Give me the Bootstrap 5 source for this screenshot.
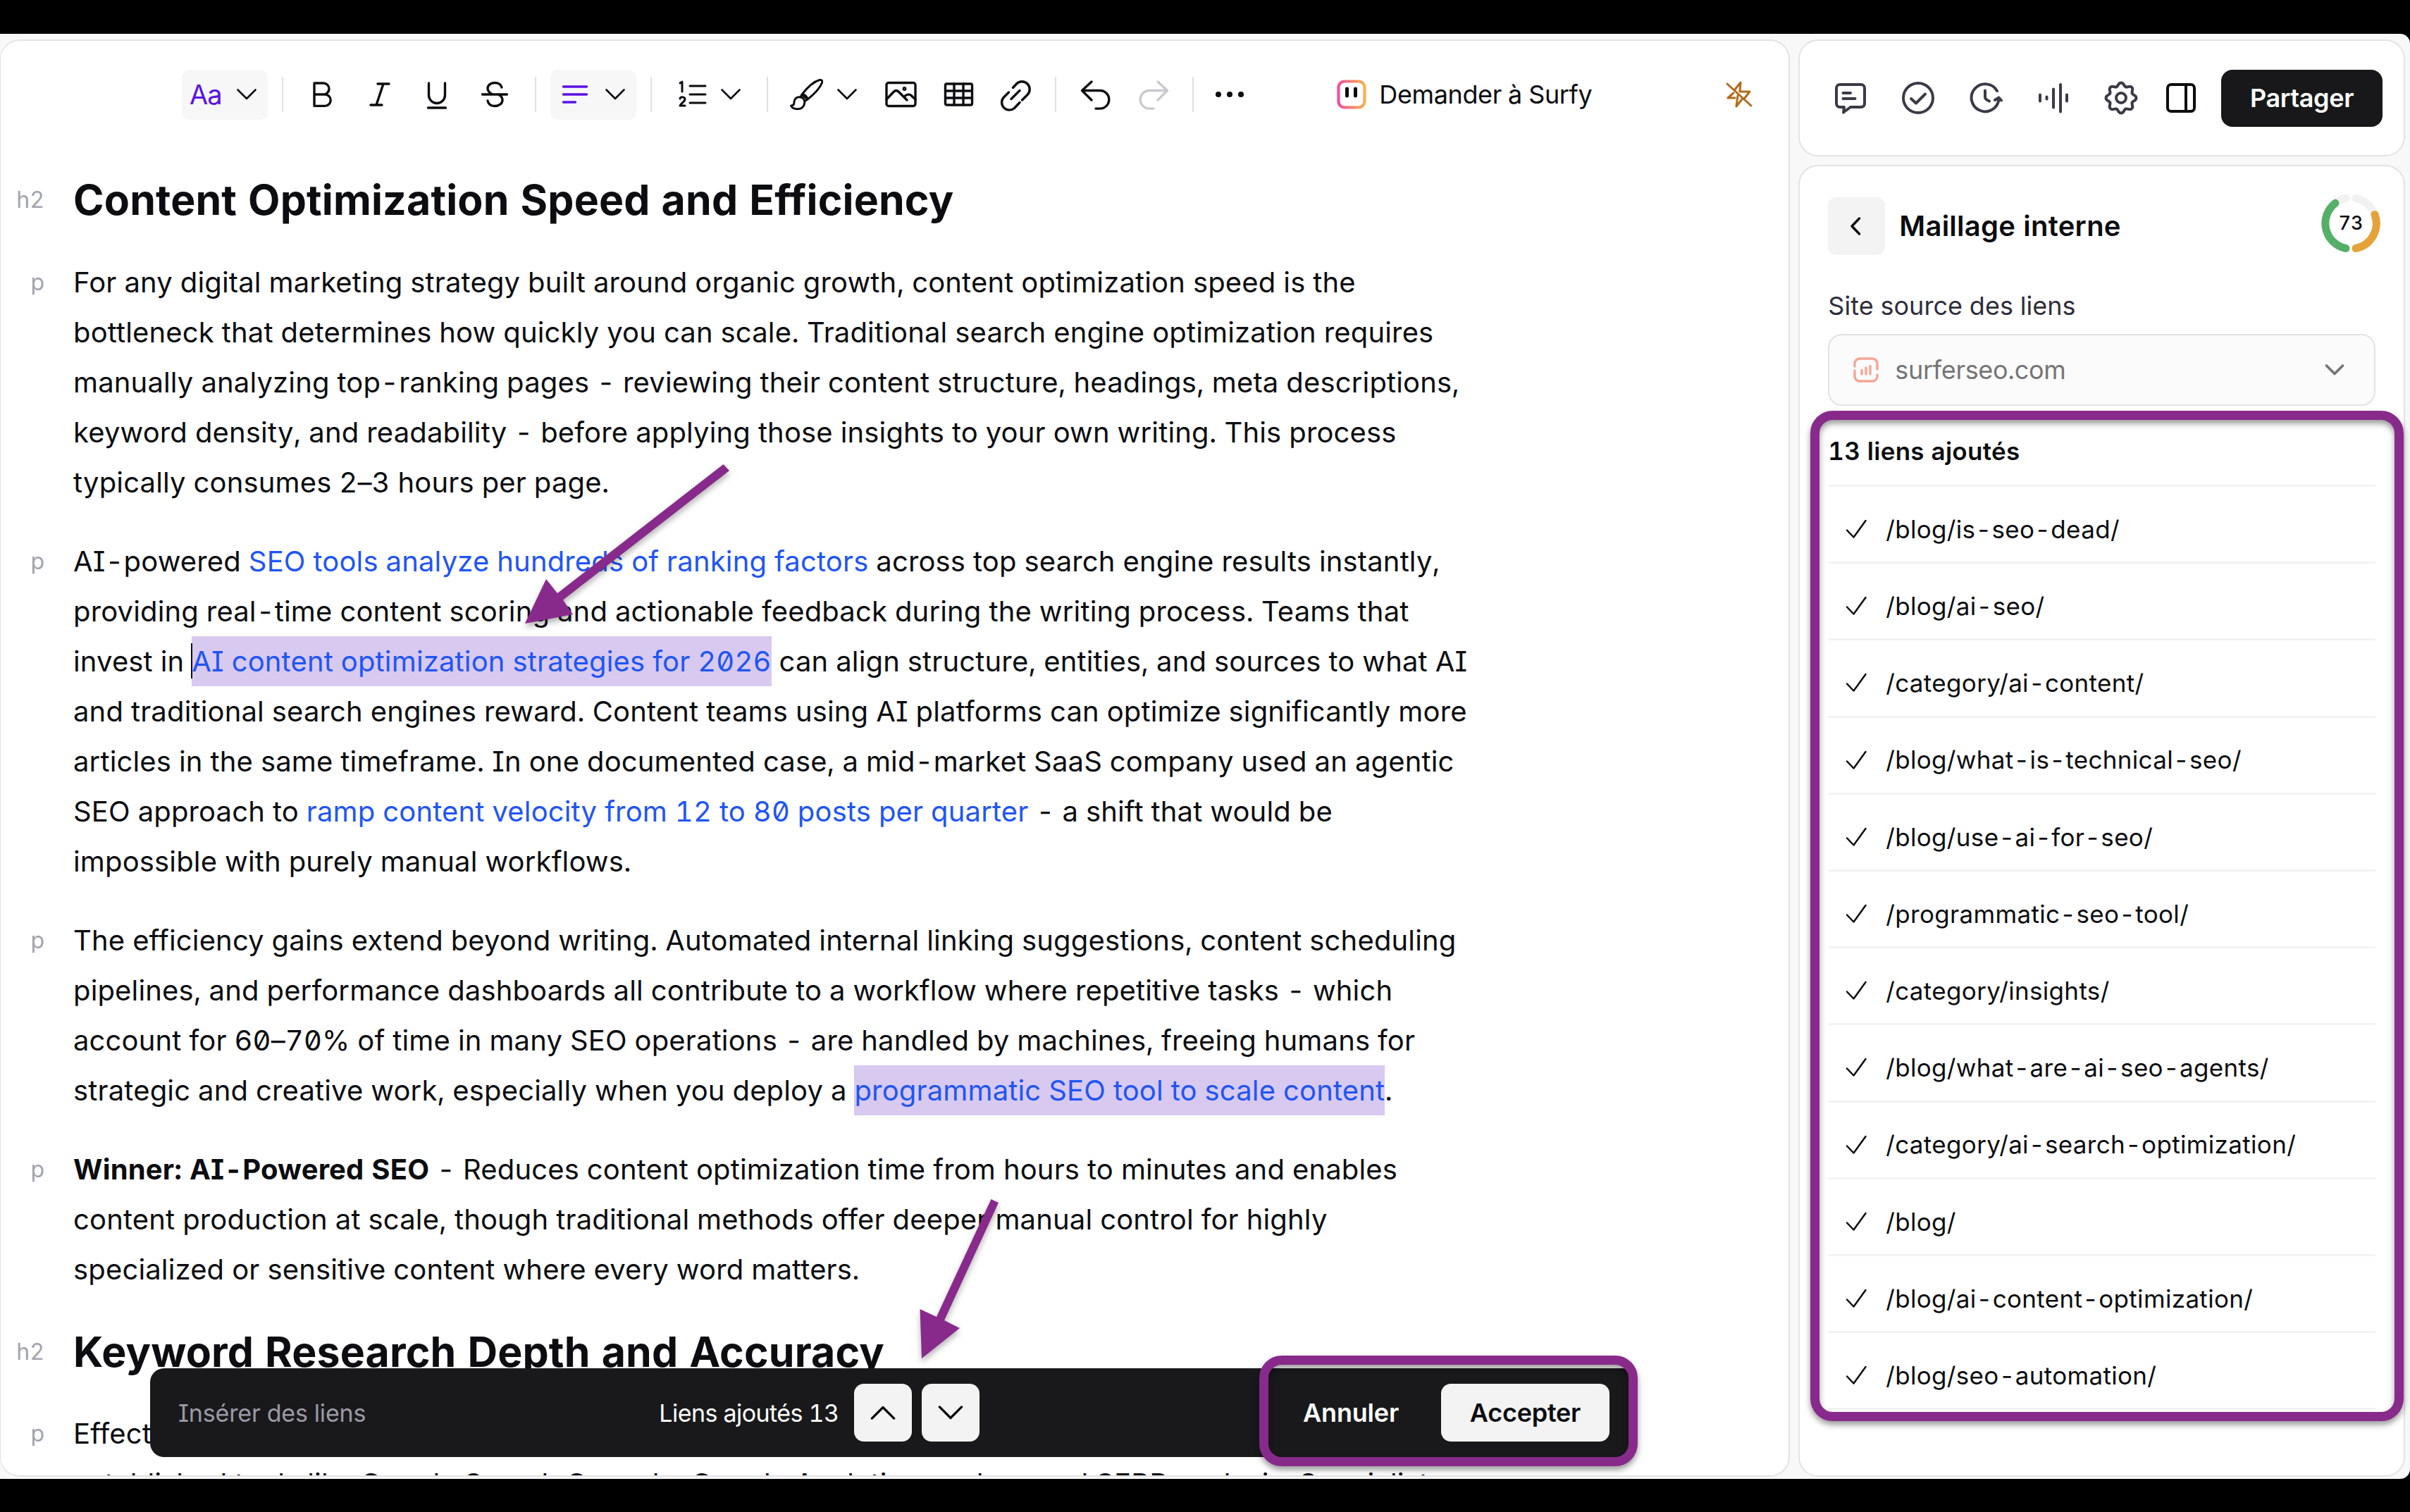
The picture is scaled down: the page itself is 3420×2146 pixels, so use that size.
<!DOCTYPE html>
<html lang="fr">
<head>
<meta charset="utf-8">
<meta name="viewport" content="width=device-width, initial-scale=1">
<title>Maillage interne</title>
<link href="https://cdn.jsdelivr.net/npm/bootstrap@5.3.0/dist/css/bootstrap.min.css" rel="stylesheet">
<style>
body{background:#000;font-family:Inter,"Liberation Sans",sans-serif;color:#0c0d10;font-size:36px;font-feature-settings:"tnum","zero","cv08";padding-top:48px;height:2146px;overflow:hidden}
.stage{height:2051px;background:#f8f8f8;border-radius:0 14px 14px 0;padding:8px 7px 3px 0;gap:12px;position:relative}
.panel{background:#fff;border:2px solid #e3e3e5;border-radius:28px;overflow:hidden}
.editor{width:2541px;border-left-width:1px}
.side{width:861px;gap:12px}
svg{display:block;flex:none}
.ic{fill:none;stroke:#0c0d10;stroke-width:3.4;stroke-linecap:round;stroke-linejoin:round}
.ic2{fill:none;stroke:#3b3a47;stroke-width:4;stroke-linecap:round;stroke-linejoin:round}
.toolbar{height:72px;margin-top:40px;padding-left:257px;padding-right:50px}
.tool{width:81.4px;height:72px;display:flex;align-items:center;justify-content:center;flex:none}
.drop{width:122px;height:71px;border-radius:10px;display:flex;align-items:center;flex:none;padding:0 16px 0 15px;justify-content:space-between}
.drop.on{background:#f7f7f8}
.sep{width:2px;height:50px;background:#e1e1e4;flex:none}
.aa{color:#5a12e6;font-size:38px;letter-spacing:-1px;margin-left:-4px}
.ask{margin-left:112px;gap:18px;letter-spacing:-.38px}
.doc{margin-top:78px}
.blk{display:flex}
.tag{width:62px;flex:none;text-align:right;color:#a3a3ad;font-size:32px;line-height:71px}
.txt{margin-left:41px;font-size:40px;line-height:71.1px;white-space:nowrap;margin-bottom:40.6px;letter-spacing:.15px}
.ttl{margin-left:41px;font-size:59px;line-height:71px;font-weight:700;white-space:nowrap;margin-bottom:45.7px;letter-spacing:.15px}
.txt.pre{margin-bottom:45.4px}
.lk{color:#1f55f5}
.hl{background:#d8c9f0;padding:10.8px 0}
.caret{border-left:2px solid #0c0d10;margin-left:-2px}
.cv{padding-left:0;margin-left:0}
.cv::before{content:"";position:absolute;width:2px;height:50px;background:#0c0d10;margin:10px 0 0 -1px}
.head{height:166px;padding:0 30px 0 48px}
.share{width:229px;height:81px;border-radius:16px;background:#18181a;color:#fff;font-size:36px;font-weight:600;letter-spacing:-.38px;padding:0;margin-left:33px;border:0}
.body2{padding:0 40px}
.titlerow{margin-top:39px;height:92px}
.panttl{font-size:40px;letter-spacing:.26px;margin-left:20px}
.back{width:81px;height:82px;background:#f3f3f3;border-radius:12px}
.ring{width:86px;height:86px;margin-right:-8px;margin-top:-8px}
.ringtx{position:absolute;inset:0;font-size:27px;font-weight:500;display:flex;align-items:center;justify-content:center}
.srclabel{margin-top:40px;line-height:54px;color:#2f2e3b;letter-spacing:.05px}
.pick{height:102px;border:2px solid #e3e3e3;border-radius:20px;background:#fbfbfb;color:#757575;padding:0 42px 0 34px;margin-top:13px;letter-spacing:-.3px}
.cnt{font-weight:600;font-size:35px;line-height:48px;margin-top:40px;letter-spacing:.28px}
.links{border-top:3px solid #f3f3f3;margin-top:24px}
.links li{height:109.2px;border-bottom:3px solid #f3f3f3;padding:14px 0 0 24px;font-size:35px;letter-spacing:.33px}
.ov{position:absolute}
.bar{left:213px;top:1894px;width:2110px;height:126px;border-radius:20px;background:#19191b;color:#fff;padding:0 39px 0 40px;font-size:34px}
.sq{width:82px;height:82px;border-radius:14px;background:#f3f3f3}
.frame{border:13px solid #882a8b;border-radius:32px;filter:drop-shadow(0 5px 4px rgba(0,0,0,.4))}
.f1{left:2569px;top:535px;width:842px;height:1434px}
.f2{left:1787px;top:1876px;width:537px;height:157px}
.arrows{left:0;top:0;filter:drop-shadow(0 5px 4px rgba(0,0,0,.3))}
.cancel{font-size:36px;letter-spacing:-.2px}
.accept{width:239px;height:82px;border-radius:14px;background:#f3f3f3;color:#0c0d10;font-weight:600;border:0;padding:0;font-size:36px;letter-spacing:-.25px;margin-left:60px}
</style>
<script src="https://cdn.jsdelivr.net/npm/bootstrap@5.3.0/dist/js/bootstrap.bundle.min.js"></script>
</head>
<body>
<svg width="0" height="0" class="position-absolute"><defs>
<symbol id="chev" viewBox="0 0 28 16"><path d="M1.5 1.5 14 14 26.5 1.5" fill="none" stroke="currentColor" stroke-width="2.600" stroke-linecap="round" stroke-linejoin="round"/></symbol>
<path id="tooth" d="M-6.5-15.7C-3.5-16.9-4.3-21.5 0-21.5S3.5-16.9 6.5-15.7"/>
</defs></svg>
<div class="stage d-flex">
 <main class="panel editor">
  <div class="toolbar d-flex align-items-center">
   <div class="drop on"><span class="aa">Aa</span><svg width="28" height="16"><use href="#chev"/></svg></div>
   <span class="sep" style="margin:0 15px 0 20px"></span>
   <span class="tool"><svg class="ic" width="48" height="48" viewBox="0 0 48 48"><path d="M12 8h13a8 8 0 0 1 0 16H12zM12 24h15a8.200 8.200 0 0 1 0 16.400H12z"/></svg></span>
   <span class="tool"><svg class="ic" width="48" height="48" viewBox="0 0 48 48"><path d="M21 9h16M11 39h16M29 9 19 39"/></svg></span>
   <span class="tool"><svg class="ic" width="48" height="48" viewBox="0 0 48 48"><path d="M12.500 8v17a11.500 11.500 0 0 0 23 0V8M11.500 43h25"/></svg></span>
   <span class="tool"><svg class="ic" width="48" height="48" viewBox="0 0 48 48"><path d="M6.500 24h35M34 14c-1-4-5-6.500-10-6.500-6 0-10 3.500-10 8 0 4 3 6.500 7 8.500M14 33c1 5 5 7.500 10 7.500 6 0 11-3.500 11-8.500 0-4-2.500-6.500-6-8"/></svg></span>
   <span class="sep" style="margin:0 20px 0 16px"></span>
   <div class="drop on"><svg class="ic" width="40" height="40" viewBox="0 0 40 40" style="stroke:#5a12e6"><path d="M3.500 9h33M3.500 20h33M3.500 31h17"/></svg><svg width="28" height="16"><use href="#chev"/></svg></div>
   <span class="sep" style="margin:0 20px"></span>
   <div class="drop"><svg class="ic" width="44" height="44" viewBox="0 0 44 44" style="stroke-width:3"><path d="M19 10h22M19 22h22M19 34h22M5 6l3-2v14M5 28c1-3 7-3 7 1 0 3-5 5-7 9h7"/></svg><svg width="28" height="16"><use href="#chev"/></svg></div>
   <span class="sep" style="margin:0 20px 0 21px"></span>
   <div class="drop" style="padding-left:10px;margin-right:6px"><svg class="ic" width="48" height="48" viewBox="0 0 48 48" style="stroke-width:3"><path d="M18 24C25 15 34 6 43 3.500c3-.5 4.500 1 3.500 4C43 16 35 24 26 31zM18 24c4 0 7 3 8 7M18 24l-2 4M26 31l-4.500 3M16 28c-6-1-9 3-9 7 0 3-1 5-4.500 5C5 46 18 47 21 39c1-3 1-7-1-9-1-1-2-2-4-2z"/></svg><svg width="28" height="16"><use href="#chev"/></svg></div>
   <span class="tool"><svg class="ic" width="48" height="48" viewBox="0 0 48 48"><rect x="4" y="7.500" width="41" height="33" rx="3"/><path d="M4 31 14 20.500c2.500-2.500 5-2.500 7.500 0L33 32M29 28c3-5 9-5 11.500-1L45 31"/><circle cx="29.500" cy="16" r="1.200"/></svg></span>
   <span class="tool"><svg class="ic" width="48" height="48" viewBox="0 0 48 48"><rect x="5.500" y="9" width="38" height="30" rx="2"/><path d="M5.500 19h38M5.500 29h38M18 9v30M31 9v30"/></svg></span>
   <span class="tool"><svg class="ic" width="48" height="48" viewBox="0 0 48 48"><path d="M20.500 14.500l5-5.500a10.800 10.800 0 0 1 15.500 15.500l-7.500 7.500M14.500 21l-7 7A10.800 10.800 0 0 0 22.500 43.500l7.500-8M18 30.500l12-12"/></svg></span>
   <span class="sep" style="margin:0 15.800px 0 15px"></span>
   <span class="tool"><svg class="ic" width="48" height="48" viewBox="0 0 48 48"><path d="M18 6 4.500 18.500 18 32M4.500 18.500H30a12.800 12.800 0 0 1 0 25.600h-6"/></svg></span>
   <span class="tool"><svg class="ic" width="48" height="48" viewBox="0 0 48 48" style="stroke:#c9c9cf"><path d="M30 6l13.500 12.500L30 32M43.500 18.500H18a12.800 12.800 0 0 0 0 25.600h6"/></svg></span>
   <span class="sep" style="margin:0 10px 0 14.600px"></span>
   <span class="tool"><svg width="48" height="48" viewBox="0 0 48 48" fill="#0c0d10"><circle cx="8" cy="24" r="4"/><circle cx="24" cy="24" r="4"/><circle cx="40" cy="24" r="4"/></svg></span>
   <div class="ask d-flex align-items-center"><svg width="42" height="42" viewBox="0 0 42 42"><defs><linearGradient id="sg" x2="1" y2="0"><stop offset="0" stop-color="#f0509a"/><stop offset="1" stop-color="#f8b04c"/></linearGradient></defs><rect x="2.500" y="2.500" width="37" height="37" rx="8.500" fill="none" stroke="url(#sg)" stroke-width="4.200"/><path d="M14.500 13v10M26.500 13v10" stroke="#0c0d10" stroke-width="5" stroke-linecap="round"/></svg><span>Demander à Surfy</span></div>
   <svg class="ms-auto" width="40" height="40" viewBox="0 0 40 40" fill="none" stroke="#b26a1c" stroke-width="3" stroke-linejoin="round" stroke-linecap="round"><path d="M3 5 37 36M14 13 22 3l-1 13h14l-7 9M12 18l-8 7h10M18 22l-2 15 8-10"/></svg>
  </div>
  <article class="doc">
   <div class="blk"><span class="tag">h2</span><h2 class="ttl">Content Optimization Speed and Efficiency</h2></div>
   <div class="blk"><span class="tag">p</span><div class="txt">For any digital marketing strategy built around organic growth, content optimization speed is the<br>bottleneck that determines how quickly you can scale. Traditional search engine optimization requires<br>manually analyzing top-ranking pages - reviewing their content structure, headings, meta descriptions,<br>keyword density, and readability - before applying those insights to your own writing. This process<br>typically consumes 2–3 hours per page.</div></div>
   <div class="blk"><span class="tag">p</span><div class="txt">AI-powered <span class="lk">SEO tools analyze hundreds of ranking factors</span> across top search engine results instantly,<br>providing real-time content scoring and actionable feedback during the writing process. Teams that<br>invest in <span class="lk hl cv">AI content optimization strategies for 2026</span> can align structure, entities, and sources to what AI<br>and traditional search engines reward. Content teams using AI platforms can optimize significantly more<br>articles in the same timeframe. In one documented case, a mid-market SaaS company used an agentic<br>SEO approach to <span class="lk">ramp content velocity from 12 to 80 posts per quarter</span> - a shift that would be<br>impossible with purely manual workflows.</div></div>
   <div class="blk"><span class="tag">p</span><div class="txt">The efficiency gains extend beyond writing. Automated internal linking suggestions, content scheduling<br>pipelines, and performance dashboards all contribute to a workflow where repetitive tasks - which<br>account for 60–70% of time in many SEO operations - are handled by machines, freeing humans for<br>strategic and creative work, especially when you deploy a <span class="lk hl">programmatic SEO tool to scale content</span>.</div></div>
   <div class="blk"><span class="tag">p</span><div class="txt pre"><b>Winner: AI-Powered SEO</b> - Reduces content optimization time from hours to minutes and enables<br>content production at scale, though traditional methods offer deeper manual control for highly<br>specialized or sensitive content where every word matters.</div></div>
   <div class="blk"><span class="tag">h2</span><h2 class="ttl">Keyword Research Depth and Accuracy</h2></div>
   <div class="blk"><span class="tag">p</span><div class="txt">Effective<br>established tools like Google Search Console, Google Analytics, and manual SERP analysis. Specialists</div></div>
  </article>
 </main>
 <aside class="side d-flex flex-column">
  <div class="panel head d-flex align-items-center flex-none">
   <div class="d-flex flex-grow-1 justify-content-between">
   <svg class="ic2" width="48" height="48" viewBox="0 0 48 48"><path d="M9 5h30a5 5 0 0 1 5 5v22a5 5 0 0 1-5 5H24l-10 7.500L15 37H9a5 5 0 0 1-5-5V10a5 5 0 0 1 5-5zM13.500 17h10.500M13.500 25h17"/></svg>
   <svg class="ic2" width="48" height="48" viewBox="0 0 48 48"><circle cx="24" cy="24" r="21"/><path d="M14 25l7 6.500 13-13"/></svg>
   <svg class="ic2" width="48" height="48" viewBox="0 0 48 48"><path d="M40 14a19.500 19.500 0 1 0 2.500 12M23 13.500V23c0 3 3 4 6 5.500M37 27l5.500-3.500L46 27.500"/></svg>
   <svg class="ic2" width="48" height="48" viewBox="0 0 48 48"><path d="M5 19.500v9M14.500 22.500v3M24 11.500v26M34 5v38.500M43 19.500v9"/></svg>
   <svg class="ic2" width="48" height="48" viewBox="-24 -24 48 48"><use href="#tooth"/><use href="#tooth" transform="rotate(45)"/><use href="#tooth" transform="rotate(90)"/><use href="#tooth" transform="rotate(135)"/><use href="#tooth" transform="rotate(180)"/><use href="#tooth" transform="rotate(225)"/><use href="#tooth" transform="rotate(270)"/><use href="#tooth" transform="rotate(315)"/><circle r="7"/></svg>
   </div>
   <svg class="ic" width="48" height="48" viewBox="0 0 48 48" style="stroke-width:4;margin-left:37px"><rect x="5" y="5" width="38" height="38" rx="5"/><path d="M31 5v38"/></svg>
   <button class="btn share">Partager</button>
  </div>
  <div class="panel flex-grow-1">
   <div class="body2">
    <div class="titlerow d-flex align-items-center">
     <div class="back d-flex align-items-center justify-content-center"><svg class="ic me-1" width="16" height="26" viewBox="0 0 16 26"><path d="M13.500 2 3 13l10.500 11"/></svg></div>
     <div class="panttl fw-semibold">Maillage interne</div>
     <div class="ring position-relative ms-auto"><svg width="86" height="86" viewBox="-43 -43 86 86" fill="none" stroke-width="11" stroke-linecap="round"><path d="M7-35.500A36.200 36.200 0 0 1 36.200 0M-18-31.400A36.200 36.200 0 0 1-7-35.500" stroke="#f1f1f1"/><path d="M34-12.500A36.200 36.200 0 0 1 7 35.500" stroke="#e4a338"/><path d="M-7 35.500A36.200 36.200 0 0 1-22-28.700" stroke="#54b067"/></svg><div class="ringtx">73</div></div>
    </div>
    <div class="srclabel">Site source des liens</div>
    <div class="pick d-flex align-items-center"><svg width="36" height="36" viewBox="0 0 36 36" fill="none" stroke="#f8a595" stroke-width="3.400" stroke-linecap="round"><path d="M2 19v8a7 7 0 0 0 7 7h18a7 7 0 0 0 7-7v-2M34 17V9a7 7 0 0 0-7-7H9a7 7 0 0 0-7 7v4M12 18.500v5.500M18 15v9M24 12.500V24"/></svg><span style="margin-left:23px">surferseo.com</span><svg class="ms-auto" width="28" height="16" viewBox="0 0 28 16"><path d="M2.500 2 14 13.500 25.500 2" fill="none" stroke="#757575" stroke-width="3.600" stroke-linecap="round" stroke-linejoin="round"/></svg></div>
    <div class="cnt">13 liens ajoutés</div>
    <ul class="links list-unstyled mb-0" id="links"></ul>
   </div>
  </div>
 </aside>
 <div class="ov bar d-flex align-items-center">
  <span style="color:#9b9aa5;letter-spacing:-.15px">Insérer des liens</span>
  <span style="margin-left:416px;letter-spacing:-.55px">Liens ajoutés 13</span>
  <span class="sq d-flex align-items-center justify-content-center text-black" style="margin-left:21px"><svg width="36" height="20" style="transform:rotate(180deg)"><use href="#chev"/></svg></span>
  <span class="sq d-flex align-items-center justify-content-center text-black" style="margin-left:14px"><svg width="36" height="20"><use href="#chev"/></svg></span>
  <span class="cancel ms-auto fw-semibold">Annuler</span>
  <button class="btn accept">Accepter</button>
 </div>
 <div class="ov frame f1"></div>
 <div class="ov frame f2"></div>
 <svg class="ov arrows" width="2500" height="2000" viewBox="0 48 2500 2000" fill="#882a8b"><path d="M1026.500 659 1035 668 799 851.500 813 872 745 885 775 822 791 842z"/><path d="M1406.500 1702 1417 1707 1340 1874 1362 1885 1308 1928 1305.500 1858 1329 1869z"/></svg>
</div>
<script>
const paths=["/blog/is-seo-dead/","/blog/ai-seo/","/category/ai-content/","/blog/what-is-technical-seo/","/blog/use-ai-for-seo/","/programmatic-seo-tool/","/category/insights/","/blog/what-are-ai-seo-agents/","/category/ai-search-optimization/","/blog/","/blog/ai-content-optimization/","/blog/seo-automation/"];
document.getElementById("links").innerHTML=paths.map(p=>`<li class="d-flex align-items-center"><svg width="32" height="28" viewBox="0 0 32 28" fill="none" stroke="#0c0d10" stroke-width="2.500" stroke-linecap="round" stroke-linejoin="round"><path d="M3 15.500 12.500 25.500 29.500 2"/></svg><span style="margin-left:26px">${p}</span></li>`).join("");
</script>
</body>
</html>
